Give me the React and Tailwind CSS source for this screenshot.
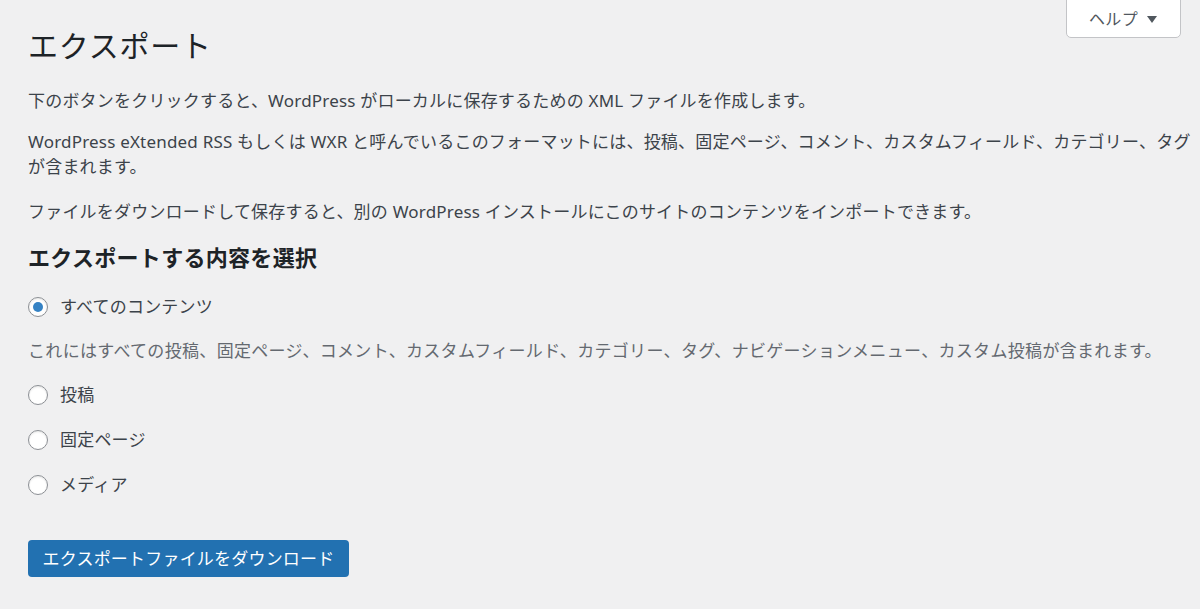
import React from "react";

const font = { fontFamily: '"Noto Sans", "Noto Sans CJK JP", sans-serif' };

function Radio({ checked, label }) {
  return (
    <label className="flex items-center h-[25px]">
      <span className="w-[20px] h-[20px] rounded-full border border-[#8c8f94] bg-white flex items-center justify-center shrink-0 shadow-[inset_0_1px_2px_rgba(0,0,0,0.1)]">
        {checked && <span className="w-[10px] h-[10px] rounded-full bg-[#3582c4]" />}
      </span>
      <span className="ml-[12px] text-[17px] tracking-[0.2px] text-[#3c434a]">{label}</span>
    </label>
  );
}

export default function App() {
  return (
    <div className="w-[1200px] h-[609px] bg-[#f0f0f1] relative overflow-hidden" style={font}>
      <div className="absolute right-[19px] top-[-1px]">
        <button className="h-[39px] w-[115px] bg-white border border-[#c3c4c7] rounded-b-[5px] flex items-center justify-center text-[16px] tracking-[0.3px] text-[#50575e]">
          ヘルプ
          <svg width="12" height="10" viewBox="0 0 12 10" className="ml-[8px]"><path d="M1 2 L11 2 L6 9 Z" fill="#50575e" /></svg>
        </button>
      </div>
      <div className="pl-[28px] pt-[26px] text-[#3c434a] text-[17px] tracking-[0.2px]">
        <h1 className="text-[30px] tracking-[0.8px] leading-[40px] text-[#1d2327] font-normal">エクスポート</h1>
        <p className="mt-[22px] leading-[25px]">下のボタンをクリックすると、WordPress がローカルに保存するための XML ファイルを作成します。</p>
        <p className="mt-[16px] leading-[25px] w-[1164px]">WordPress eXtended RSS もしくは WXR と呼んでいるこのフォーマットには、投稿、固定ページ、コメント、カスタムフィールド、カテゴリー、タグが含まれます。</p>
        <p className="mt-[20px] leading-[25px]">ファイルをダウンロードして保存すると、別の WordPress インストールにこのサイトのコンテンツをインポートできます。</p>
        <h2 className="mt-[18px] text-[22px] tracking-[0.3px] leading-[30px] font-bold text-[#1d2327]">エクスポートする内容を選択</h2>
        <div className="mt-[22px]"><Radio checked label="すべてのコンテンツ" /></div>
        <p className="mt-[19px] leading-[25px] text-[#646970] tracking-[0.32px]">これにはすべての投稿、固定ページ、コメント、カスタムフィールド、カテゴリー、タグ、ナビゲーションメニュー、カスタム投稿が含まれます。</p>
        <div className="mt-[19px]"><Radio label="投稿" /></div>
        <div className="mt-[20px]"><Radio label="固定ページ" /></div>
        <div className="mt-[20px]"><Radio label="メディア" /></div>
        <button className="mt-[43px] h-[37px] w-[321px] bg-[#2271b1] rounded-[4px] text-white text-[17px] tracking-[0.2px] flex items-center justify-center">エクスポートファイルをダウンロード</button>
      </div>
    </div>
  );
}
